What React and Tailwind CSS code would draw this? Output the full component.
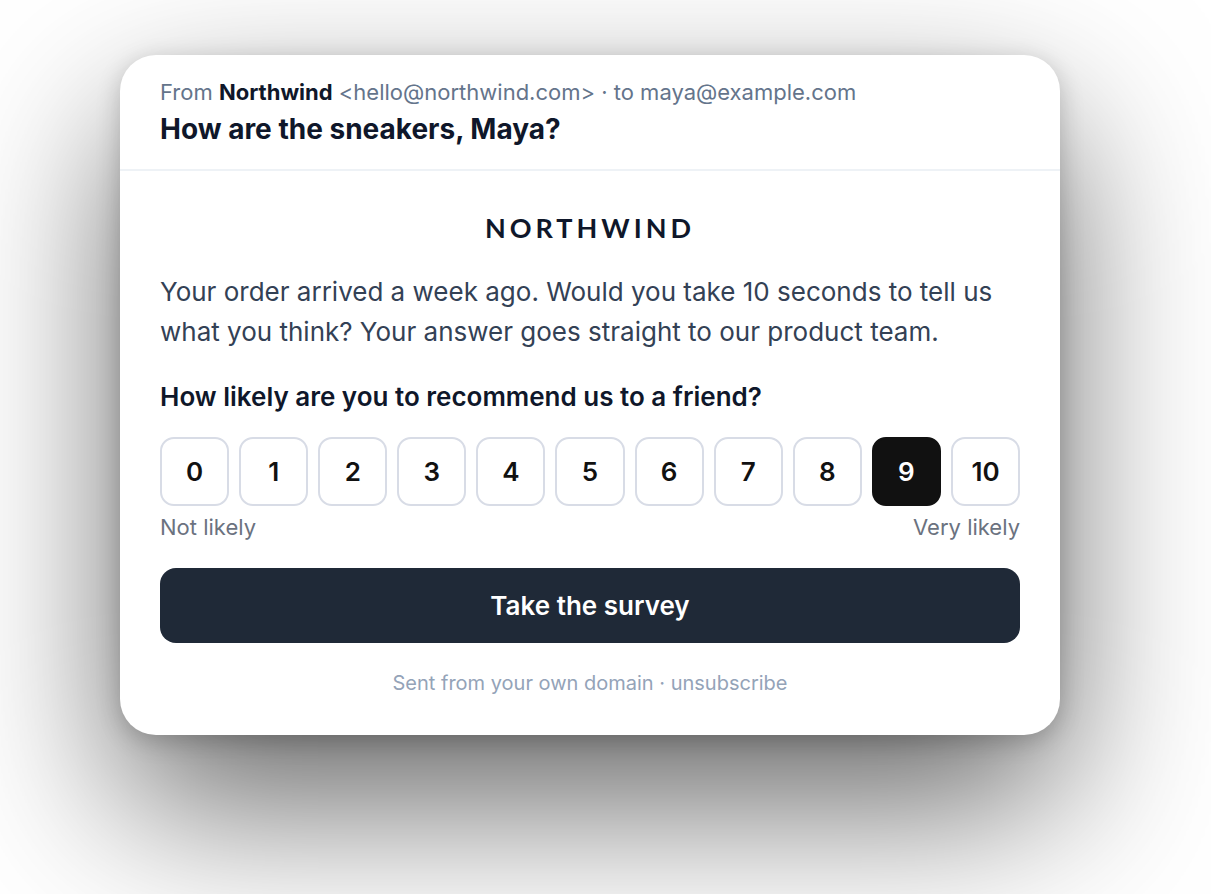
const scores = [0, 1, 2, 3, 4, 5, 6, 7, 8, 9, 10];

function Score({ value, selected }) {
  return (
    <button
      type="button"
      aria-pressed={selected}
      className={
        "flex aspect-square min-w-0 flex-1 items-center justify-center rounded-[14px] border-2 text-[26px] font-semibold " +
        (selected ? "border-[#111111] bg-[#111111] text-white" : "border-[#d8dce6] bg-white text-[#111111]")
      }
    >
      {value}
    </button>
  );
}

export default function App() {
  return (
    <div className="min-h-screen overflow-hidden bg-white pt-[55px] pr-[151px] pl-[120px] font-['Inter',sans-serif] antialiased">
      <main className="rounded-[36px] bg-white shadow-[0_70px_164px_rgba(0,0,0,0.6),0_6px_24px_rgba(0,0,0,0.2)]">
        <header className="border-b-2 border-[#eef2f6] px-10 pt-5 pb-5">
          <p className="text-[22px] leading-[34px] text-[#64748b]">
            From <strong className="font-bold text-[#0f172a]">Northwind</strong> &lt;hello@northwind.com&gt; · to maya@example.com
          </p>
          <h1 className="text-[28px] leading-10 font-bold text-[#0f172a]">How are the sneakers, Maya?</h1>
        </header>
        <div className="px-10 pt-9 pb-9">
          <p className="text-center font-['Lato',sans-serif] text-[27px] leading-[42px] font-bold tracking-[4px] text-[#0f172a]">NORTHWIND</p>
          <p className="mt-[23px] text-[26px] leading-10 text-[#334155]">
            Your order arrived a week ago. Would you take 10 seconds to tell us what you think? Your answer goes straight to our product team.
          </p>
          <h2 className="mt-[25px] text-[26px] leading-10 font-semibold text-[#0f172a]">How likely are you to recommend us to a friend?</h2>
          <div className="mt-5 flex gap-[10px]">
            {scores.map((n) => (
              <Score key={n} value={n} selected={n === 9} />
            ))}
          </div>
          <div className="mt-1 flex justify-between text-[22px] leading-[34px] text-[#6b7280]">
            <span>Not likely</span>
            <span>Very likely</span>
          </div>
          <button type="button" className="mt-6 h-[75px] w-full rounded-[16px] bg-[#1f2937] text-[26px] font-semibold text-white">
            Take the survey
          </button>
          <p className="mt-6 text-center text-[20px] leading-8 text-[#94a3b8]">Sent from your own domain · unsubscribe</p>
        </div>
      </main>
    </div>
  );
}
